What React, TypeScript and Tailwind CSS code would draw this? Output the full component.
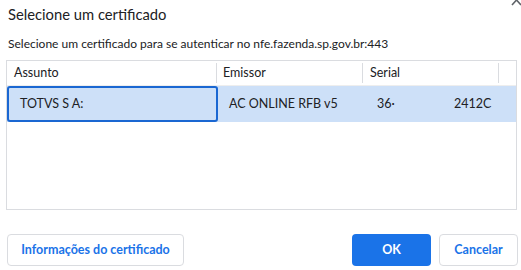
export default function App() {
  return (
    <div className="relative w-[521px] h-[270px] bg-white overflow-hidden font-['Lato',sans-serif] text-[#202124]">
      {/* close mark, mostly cut off at the top */}
      <svg className="absolute left-[511px] top-[-6px]" width="11" height="12" viewBox="0 0 11 12">
        <path d="M1 1 L10 11 M10 1 L1 11" stroke="#5f6368" strokeWidth="1.6" fill="none" />
      </svg>

      <div className="pl-2 pt-[3px]">
        <h1 className="text-[14.75px] leading-[22px]">Selecione um certificado</h1>
        <p className="mt-[11px] text-[12px] leading-[16px]">
          Selecione um certificado para se autenticar no nfe.fazenda.sp.gov.br:443
        </p>
      </div>

      <div className="ml-[6px] mt-[8px] w-[511px] h-[150px] border border-[#dadce0]">
        <div className="flex h-[25px] items-center text-[12.5px] border-b border-[#eeeeee]">
          <div className="w-[210px] pl-[7px] border-r border-[#dadce0] h-[20px] leading-[20px]">Assunto</div>
          <div className="w-[146px] pl-[6px] border-r border-[#dadce0] h-[20px] leading-[20px]">Emissor</div>
          <div className="w-[136px] pl-[7px] border-r border-[#dadce0] h-[20px] leading-[20px]">Serial</div>
        </div>
        <div className="flex h-[36px] items-center bg-[#cde0f8] text-[12.5px]">
          <div className="w-[211px] h-[36px] flex items-center pl-[11px] border-2 border-[#1a67d2] rounded-[3px]">
            TOTVS S A:
          </div>
          <div className="w-[146px] pl-[11px]">AC ONLINE RFB v5</div>
          <div className="flex pl-[13px]">
            <span className="w-[77px]">36·</span>
            <span>2412C</span>
          </div>
        </div>
      </div>

      <div className="flex items-center mt-[24px] pl-[7px] pr-[3px]">
        <button className="w-[177px] h-[32px] rounded-[4px] border border-[#dadce0] text-[#1a73e8] text-[12.5px] font-bold">
          Informações do certificado
        </button>
        <div className="ml-auto flex gap-[8px]">
          <button className="w-[79px] h-[32px] rounded-[4px] bg-[#1a73e8] text-white text-[12.5px] font-bold">
            OK
          </button>
          <button className="w-[79px] h-[32px] rounded-[4px] border border-[#dadce0] text-[#1a73e8] text-[12.5px] font-bold">
            Cancelar
          </button>
        </div>
      </div>
    </div>
  );
}
